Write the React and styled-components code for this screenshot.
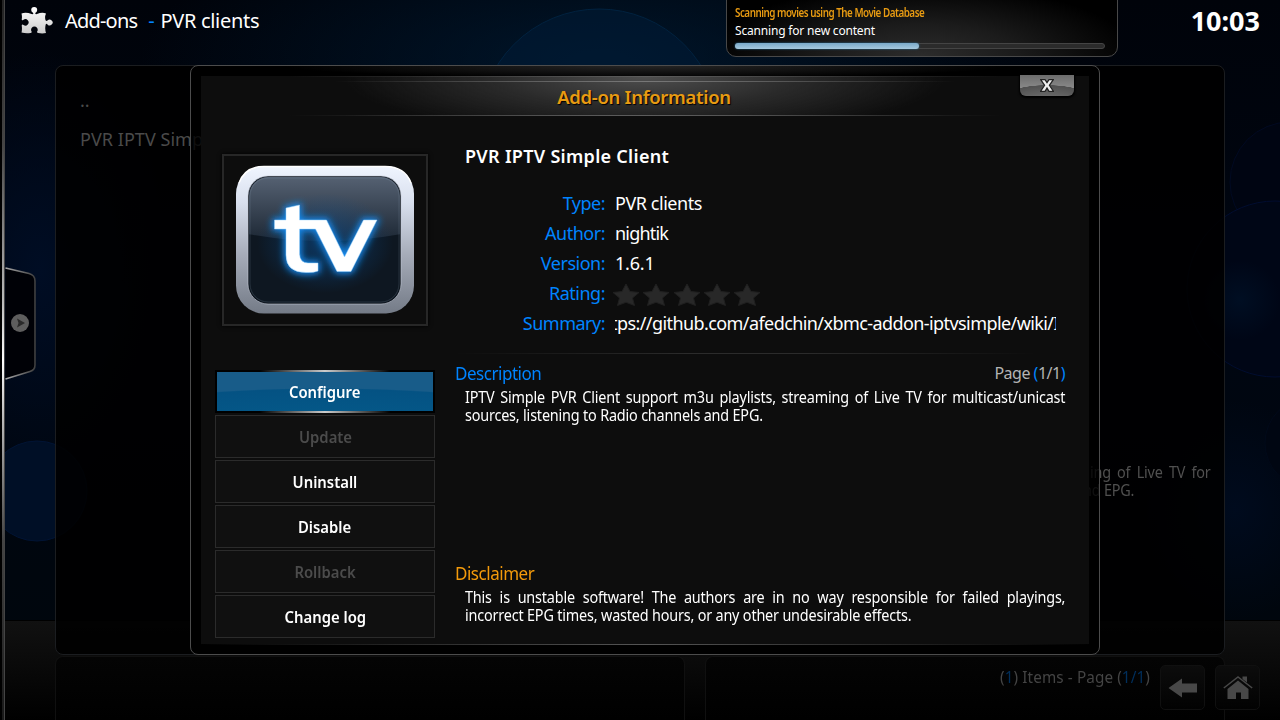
import React from "react";
import styled, { createGlobalStyle } from "styled-components";

const GlobalStyle = createGlobalStyle`
  body {
    margin: 0;
    background: #000;
    overflow: hidden;
    font-family: "Noto Sans", sans-serif;
  }
`;

const infoRows = [
  { label: "Type:", value: "PVR clients", gap: -0.45 },
  { label: "Author:", value: "nightik", gap: -0.8 },
  { label: "Version:", value: "1.6.1", gap: -0.2 },
  { label: "Rating:", stars: 5 },
  {
    label: "Summary:",
    value: "tps://github.com/afedchin/xbmc-addon-iptvsimple/wiki/I",
    shift: -4,
    gap: -0.58,
  },
];

const actions = [
  { text: "Configure", state: "focus" },
  { text: "Update", state: "off" },
  { text: "Uninstall" },
  { text: "Disable" },
  { text: "Rollback", state: "off" },
  { text: "Change log" },
];

const App = () => {
  return (
    <Screen>
      <GlobalStyle />
      <Backdrop />
      <Page>
        <TopBar>
          <PuzzleIcon />
          <Crumb $space={-0.8}>Add-ons</Crumb>
          <Dash>-</Dash>
          <Crumb>PVR clients</Crumb>
          <Clock>10:03</Clock>
        </TopBar>
        <ListPanel>
          <ListItem>..</ListItem>
          <ListItem>PVR IPTV Simple Client</ListItem>
          <Plot>
            <PlotLine>streaming of Live TV for</PlotLine>
            <PlotLine>channels and EPG.</PlotLine>
          </Plot>
        </ListPanel>
        <Footer>
          <FooterPanel $width={630} />
          <FooterPanel $width={520}>
            <span>
              (<b>1</b>) Items - Page (<b>1/1</b>)
            </span>
          </FooterPanel>
        </Footer>
      </Page>
      <NavButtons>
        <NavButton>
          <svg width="30" height="22" viewBox="0 0 30 22">
            <path d="M0.500 11 14 1.500V6.500H29V15.500H14V20.500Z" fill="#484848" />
          </svg>
        </NavButton>
        <NavButton>
          <svg width="30" height="26" viewBox="0 0 30 26">
            <path d="M4.500 14 15 5.500 25.500 14V24H18V17.500H13V24H4.500Z" fill="#484848" />
            <path d="M0.800 13 15 2 29.200 13" fill="none" stroke="#484848" strokeWidth="1.500" />
            <path d="M19.500 1.500H24V7.500L19.500 4Z" fill="#484848" />
          </svg>
        </NavButton>
      </NavButtons>
      <SideHandle />
      <ScanBox>
        <ScanTitle>Scanning movies using The Movie Database</ScanTitle>
        <ScanText>Scanning for new content</ScanText>
        <Track>
          <TrackFill />
        </Track>
      </ScanBox>
      <Dialog>
        <DialogBody>
          <DialogTitle>Add-on Information</DialogTitle>
          <Close>
            <svg width="14" height="13" viewBox="0 0 14 13">
              <path
                d="M0.700 0.700H5L7 3.700 9 0.700H13.300L9.400 6.300 13.500 12.300H9L7 9 5 12.300H0.500L4.600 6.300Z"
                fill="#eee"
                stroke="#222"
                strokeWidth="1.200"
              />
            </svg>
          </Close>
          <Columns>
            <LeftColumn>
              <Thumb>
                <TvLogo />
              </Thumb>
              <ButtonList>
                {actions.map((a) => (
                  <Action key={a.text} $state={a.state}>
                    <ActionText>{a.text}</ActionText>
                  </Action>
                ))}
              </ButtonList>
            </LeftColumn>
            <RightColumn>
              <AddonName>PVR IPTV Simple Client</AddonName>
              {infoRows.map((row) => (
                <InfoRow key={row.label}>
                  <InfoLabel>{row.label}</InfoLabel>
                  {row.stars ? (
                    <Stars count={row.stars} />
                  ) : (
                    <InfoValue>
                      <Scroll $shift={row.shift} $space={row.gap}>
                        {row.value}
                      </Scroll>
                    </InfoValue>
                  )}
                </InfoRow>
              ))}
              <Divider />
              <Section $height={200}>
                <SectionHead>
                  <SectionTitle>Description</SectionTitle>
                  <PageCount>
                    Page <b>(</b>1/1<b>)</b>
                  </PageCount>
                </SectionHead>
                <Line $justify>
                  IPTV Simple PVR Client support m3u playlists, streaming of Live TV for multicast/unicast
                </Line>
                <Line>sources, listening to Radio channels and EPG.</Line>
              </Section>
              <Section>
                <SectionHead>
                  <SectionTitle $orange>Disclaimer</SectionTitle>
                </SectionHead>
                <Line $justify>
                  This is unstable software! The authors are in no way responsible for failed playings,
                </Line>
                <Line>incorrect EPG times, wasted hours, or any other undesirable effects.</Line>
              </Section>
            </RightColumn>
          </Columns>
        </DialogBody>
      </Dialog>
    </Screen>
  );
};

const Backdrop = () => {
  return (
    <BackdropSvg width="1280" height="720" viewBox="0 0 1280 720">
      <defs>
        <linearGradient id="sky" x1="0" y1="0" x2="0" y2="1">
          <stop offset="0" stopColor="#00030a" />
          <stop offset="0.4" stopColor="#000612" />
          <stop offset="1" stopColor="#00060c" />
        </linearGradient>
        <radialGradient id="glow">
          <stop offset="0" stopColor="#00284a" stopOpacity="0.700" />
          <stop offset="1" stopColor="#00284a" stopOpacity="0" />
        </radialGradient>
        <radialGradient id="blue">
          <stop offset="0" stopColor="#000d24" />
          <stop offset="1" stopColor="#000d24" stopOpacity="0" />
        </radialGradient>
        <linearGradient id="floor" x1="0" y1="0" x2="0" y2="1">
          <stop offset="0" stopColor="#111" />
          <stop offset="1" stopColor="#000" />
        </linearGradient>
      </defs>
      <rect width="1280" height="720" fill="url(#sky)" />
      <ellipse cx="600" cy="60" rx="460" ry="150" fill="url(#glow)" opacity="0.700" />
      <ellipse cx="40" cy="270" rx="130" ry="220" fill="url(#blue)" />
      <circle cx="599" cy="129" r="120" fill="#001a36" fillOpacity="0.600" stroke="#00223f" />
      <circle cx="37" cy="491" r="50" fill="#000f26" stroke="#001434" />
      <circle cx="1290" cy="182" r="60" fill="#000512" stroke="#000a22" />
      <circle cx="1275" cy="289" r="88" fill="#000616" stroke="#000d30" />
      <ellipse cx="1240" cy="300" rx="40" ry="40" fill="url(#glow)" opacity="0.350" />
      <ellipse cx="1235" cy="510" rx="90" ry="110" fill="url(#blue)" opacity="0.700" />
      <circle cx="1310" cy="443" r="45" fill="#000612" stroke="#000a1a" />
      <rect y="621" width="1280" height="99" fill="url(#floor)" />
      <path d="M0 620.500H1280" stroke="#000" />
    </BackdropSvg>
  );
};

const PuzzleIcon = () => {
  return (
    <svg width="32" height="27" viewBox="0 0 32 27">
      <defs>
        <linearGradient id="puzzle" x1="0" y1="0" x2="0" y2="1">
          <stop offset="0" stopColor="#fff" />
          <stop offset="1" stopColor="#ccc" />
        </linearGradient>
      </defs>
      <path
        fill="url(#puzzle)"
        d="M0.500 6.500Q5 5 10.500 7Q12.500 7.500 12.300 6Q10.200 4.800 10.200 3A3 3 0 0 1 16.200 3Q16.200 4.800 14.300 6Q14.200 7.500 16 7Q21 5 25 6.500Q23.500 10 24.500 13Q25 14.800 26.500 13.600A2.900 2.900 0 1 1 26.500 17.400Q25 16 24.600 18Q23.700 22 25 26Q21 26.800 17 25.900Q15.200 25.300 16.600 23.700A3.300 3.300 0 1 0 10.200 23.700Q11.500 25.500 9.500 26Q5 26.800 0.500 25.500Q1.300 22 0.700 18.500Q1 17 2.500 18A3.200 3.200 0 1 0 2.500 12.800Q1 14 0.700 12.500Q1.300 9.500 0.500 6.500Z"
      />
    </svg>
  );
};

const TvLogo = () => {
  return (
    <svg width="180" height="150" viewBox="0 0 180 150">
      <defs>
        <linearGradient id="rim" x1="0" y1="0" x2="0" y2="1">
          <stop offset="0" stopColor="#f0f5ff" />
          <stop offset="0.250" stopColor="#d8dfed" />
          <stop offset="0.600" stopColor="#a6acb9" />
          <stop offset="1" stopColor="#747b87" />
        </linearGradient>
        <linearGradient id="glass" x1="0" y1="0" x2="0" y2="1">
          <stop offset="0" stopColor="#566273" />
          <stop offset="1" stopColor="#1c2734" />
        </linearGradient>
        <radialGradient id="aura">
          <stop offset="0" stopColor="#0a4f92" stopOpacity="0.600" />
          <stop offset="1" stopColor="#0a4f92" stopOpacity="0" />
        </radialGradient>
        <clipPath id="screen">
          <rect x="14" y="12" width="151" height="126" rx="19" />
        </clipPath>
        <filter id="neon" x="-30%" y="-30%" width="160%" height="160%">
          <feGaussianBlur stdDeviation="3.500" />
        </filter>
      </defs>
      <rect x="1" y="1" width="178" height="147.500" rx="28" fill="url(#rim)" />
      <path d="M4 18Q10 1.500 29 1.500H150Q170 1.500 176 18" fill="none" stroke="#fff" strokeWidth="1.500" />
      <rect x="13" y="11" width="153" height="128" rx="20" fill="#0d131b" stroke="#c4cbd8" strokeWidth="0.600" />
      <g clipPath="url(#screen)">
        <rect x="13" y="11" width="153" height="128" fill="#0e1721" />
        <path d="M13 11H166V69Q89 83 13 69Z" fill="url(#glass)" />
        <ellipse cx="90" cy="78" rx="68" ry="50" fill="url(#aura)" />
      </g>
      <rect x="15" y="13" width="149" height="124" rx="18" fill="none" stroke="#8fa3bb" strokeOpacity="0.200" />
      <g fill="#168bf0" stroke="#168bf0" strokeWidth="4" filter="url(#neon)">
        <LogoMark />
      </g>
      <g fill="#fff" stroke="#9ed4ff" strokeWidth="0.500">
        <LogoMark />
      </g>
    </svg>
  );
};

// the mark of the client: a "t" whose bar runs into the "v"
const LogoMark = () => {
  return (
    <path d="M39.500 55H51V43L64.500 40V55H91.500L109.500 92 128.500 55H142L116 106.500H102L80.500 64H64.500V88Q64.500 98 73 98H83V106Q78 108 71 107.500Q51 107.500 51 90V64H39.500Z" />
  );
};

const Stars = ({ count }) => {
  return (
    <StarRow>
      {Array.from({ length: count }, (_, i) => (
        <svg key={i} width="28" height="24" viewBox="0 0 28 24">
          <path
            d="M14 1 18 8.500 27 9.500 20.500 15 22.500 22.500 14 19.300 5.500 22.500 7.500 15 1 9.500 10 8.500Z"
            fill="#282828"
            stroke="#202020"
          />
        </svg>
      ))}
    </StarRow>
  );
};

const SideHandle = () => {
  return (
    <HandleSvg width="40" height="720" viewBox="0 0 40 720">
      <defs>
        <linearGradient id="edge" x1="0" y1="0" x2="0" y2="720" gradientUnits="userSpaceOnUse">
          <stop offset="0" stopColor="#222" />
          <stop offset="0.200" stopColor="#444" />
          <stop offset="0.420" stopColor="#bbb" />
          <stop offset="0.500" stopColor="#fff" />
          <stop offset="0.580" stopColor="#bbb" />
          <stop offset="0.750" stopColor="#444" />
          <stop offset="1" stopColor="#181818" />
        </linearGradient>
        <linearGradient id="tab" x1="5" y1="0" x2="36" y2="0" gradientUnits="userSpaceOnUse">
          <stop offset="0" stopColor="#aaa" />
          <stop offset="1" stopColor="#3c3c3c" />
        </linearGradient>
      </defs>
      <rect width="5" height="720" fill="#000" />
      <rect x="2" width="2" height="720" fill="url(#edge)" />
      <rect x="4" width="1" height="720" fill="#444" />
      <path d="M5.500 268 29 273.500Q35 275 35 281V365Q35 370 30 371.500L5.500 379Z" fill="#000106" />
      <path
        d="M5.500 268 29 273.500Q35 275 35 281V365Q35 370 30 371.500L5.500 379"
        fill="none"
        stroke="url(#tab)"
        strokeWidth="1.600"
      />
      <circle cx="20" cy="323" r="9" fill="#5e5e5e" />
      <path d="M17 318.500 25 323 17 327.500 18.500 323Z" fill="#2a2a2a" />
    </HandleSvg>
  );
};

const Screen = styled.div`
  position: relative;
  width: 1280px;
  height: 720px;
  overflow: hidden;
  color: #fff;
`;

const BackdropSvg = styled.svg`
  position: absolute;
  inset: 0;
`;

const HandleSvg = styled.svg`
  position: absolute;
  left: 0;
  top: 0;
`;

const Page = styled.div`
  position: relative;
  display: flex;
  flex-direction: column;
  height: 720px;
`;

const TopBar = styled.div`
  display: flex;
  height: 65px;
  padding: 0 20px 0 21px;
  box-sizing: border-box;

  svg {
    margin-top: 7px;
  }
`;

const Crumb = styled.div`
  font-size: 20px;
  line-height: 42px;
  letter-spacing: ${(p) => p.$space || -0.3}px;
  white-space: nowrap;

  svg + & {
    margin-left: 12px;
  }
`;

const Dash = styled(Crumb)`
  color: #0084ff;
  margin: 0 6px 0 11px;
`;

const Clock = styled.div`
  margin-left: auto;
  font-size: 27px;
  font-weight: 700;
  line-height: 42px;
`;

const ListPanel = styled.div`
  display: flex;
  flex-direction: column;
  width: 1170px;
  height: 590px;
  margin-left: 55px;
  padding: 15px 13px 0 24px;
  box-sizing: border-box;
  border: 1px solid #1b1d20;
  border-radius: 8px;
  background: rgba(0, 0, 0, 0.88);
`;

const ListItem = styled.div`
  height: 39px;
  line-height: 39px;
  font-size: 18px;
  letter-spacing: 0.05px;
  color: #4a4a4a;
`;

const Plot = styled.div`
  display: flex;
  flex-direction: column;
  align-items: flex-end;
  margin-top: 304px;
  color: #505050;
`;

const PlotLine = styled.div`
  font-size: 16px;
  line-height: 18px;
  letter-spacing: -0.2px;
  word-spacing: 3px;
  white-space: nowrap;
  transform: scaleX(0.9);
  transform-origin: right;

  & + & {
    margin-right: 77px;
    word-spacing: 0;
  }
`;

const Footer = styled.div`
  display: flex;
  gap: 20px;
  height: 64px;
  padding: 1px 0 0 55px;
`;

const FooterPanel = styled.div`
  width: ${(p) => p.$width}px;
  height: 64px;
  padding: 11px 74px 0 0;
  box-sizing: border-box;
  border: 1px solid #101010;
  border-bottom: 0;
  border-radius: 8px 8px 0 0;
  background: linear-gradient(#040404, #000);
  text-align: right;
  font-size: 16px;
  line-height: 19px;

  span {
    display: inline-block;
    color: #444;
    letter-spacing: 0.1px;
    transform: scaleX(0.955);
    transform-origin: right;
  }

  b {
    font-weight: 400;
    color: #002f5c;
  }
`;

const NavButtons = styled.div`
  position: absolute;
  left: 1160px;
  top: 665px;
  display: flex;
  gap: 10px;
`;

const NavButton = styled.div`
  display: flex;
  align-items: center;
  justify-content: center;
  width: 45px;
  height: 45px;
  box-sizing: border-box;
  border: 1px solid #101010;
  border-radius: 5px;
  background: linear-gradient(#0c0c0c, #020202);
`;

const ScanBox = styled.div`
  position: absolute;
  left: 726px;
  top: -10px;
  width: 392px;
  height: 67px;
  padding: 13px 12px 0 8px;
  box-sizing: border-box;
  border: 1px solid #484848;
  border-radius: 10px;
  background: radial-gradient(ellipse at 50% 100%, #2c2c2c, #1b1b1b 35%, #000 78%);
`;

const ScanTitle = styled.div`
  height: 18px;
  font-size: 12px;
  line-height: 18px;
  letter-spacing: -0.6px;
  font-weight: 600;
  color: #e89b12;
  white-space: nowrap;
  transform: scaleX(0.82);
  transform-origin: left;
`;

const ScanText = styled.div`
  font-size: 12px;
  line-height: 18px;
  height: 21px;
  letter-spacing: -0.18px;
`;

const Track = styled.div`
  height: 6px;
  width: 370px;
  box-sizing: border-box;
  border: 1px solid #444;
  border-radius: 3px;
  background: #2b2b2b;
`;

const TrackFill = styled.div`
  width: 184px;
  height: 6px;
  margin: -1px;
  border-radius: 3px;
  background: linear-gradient(#79a9c9, #a5c9df);
  box-shadow: 0 0 2px #287aa8;
`;

const Dialog = styled.div`
  position: absolute;
  left: 190px;
  top: 65px;
  width: 910px;
  height: 590px;
  padding: 10px;
  box-sizing: border-box;
  border: 1px solid #4c4c4c;
  border-radius: 8px;
  background: radial-gradient(ellipse 360px 12px at 50% 0, #252525, transparent), rgba(0, 0, 0, 0.8);
`;

const DialogBody = styled.div`
  position: relative;
  height: 569px;
  background: #0d0d0d;
  border-bottom: 1px solid;
  border-image: linear-gradient(90deg, #000, #555 50%, #000) 1;
  box-sizing: border-box;
`;

const DialogTitle = styled.div`
  height: 40px;
  box-sizing: border-box;
  padding-right: 2px;
  border-top: 1px solid;
  border-bottom: 1px solid;
  border-image: linear-gradient(90deg, transparent 10%, #5c5c5c 50%, transparent 90%) 1;
  background: linear-gradient(90deg, transparent 15%, #777 50%, transparent 85%) 0 4px / 100% 1px no-repeat,
    radial-gradient(ellipse 300px 60px at 50% 0, #4e4e4e, #2a2a2a 50%, transparent);
  text-align: center;
  font-size: 18.5px;
  font-weight: 600;
  line-height: 39px;
  letter-spacing: -0.3px;
  color: #e89b12;
  text-shadow: 1px 1px 1px #000;
`;

const Close = styled.div`
  position: absolute;
  right: 15px;
  top: -1px;
  display: flex;
  align-items: center;
  justify-content: center;
  width: 54px;
  height: 21px;
  border-radius: 0 0 6px 6px;
  background: radial-gradient(ellipse 50px 18px at 50% 28px, #777, #505050 98%, transparent),
    linear-gradient(#6c6c6c, #9a9a9a);
  box-shadow: 0 1px 2px 1px #000;
`;

const Columns = styled.div`
  display: flex;
`;

const LeftColumn = styled.div`
  display: flex;
  flex-direction: column;
  width: 234px;
  padding: 38px 0 0 14px;
  box-sizing: border-box;
`;

const Thumb = styled.div`
  display: flex;
  align-items: center;
  justify-content: center;
  width: 206px;
  height: 172px;
  margin-left: 7px;
  box-sizing: border-box;
  border: 2px solid #272727;
  box-shadow: 0 0 4px #000;
`;

const ButtonList = styled.div`
  display: flex;
  flex-direction: column;
  gap: 2px;
  margin-top: 44px;
`;

const Action = styled.div`
  height: 43px;
  box-sizing: border-box;
  border: 1px solid #2b2b2b;
  background: #101010;
  text-align: center;
  font-size: 16.5px;
  font-weight: 600;
  line-height: 42px;
  color: ${(p) => (p.$state === "off" ? "#4b4b4b" : "#fff")};

  ${(p) =>
    p.$state === "focus" &&
    `
    border: 2px solid;
    border-image: linear-gradient(90deg, #000 20%, #ccc 50%, #000 80%) 1;
    line-height: 40px;
    background: radial-gradient(ellipse 320px 60px at 50% 76px, #05608f, #045283 98%, transparent),
      linear-gradient(#185c89, #185c89);
  `}
`;

const ActionText = styled.span`
  display: inline-block;
  transform: scaleX(0.9);
`;

const RightColumn = styled.div`
  display: flex;
  flex-direction: column;
  width: 632px;
  padding: 25px 0 0 20px;
  box-sizing: border-box;
`;

const AddonName = styled.div`
  height: 47px;
  margin-left: 10px;
  line-height: 30px;
  font-size: 18px;
  font-weight: 600;
  letter-spacing: 0.3px;
`;

const InfoRow = styled.div`
  display: flex;
  height: 30px;
  line-height: 30px;
  font-size: 18px;
`;

const InfoLabel = styled.div`
  width: 150px;
  text-align: right;
  letter-spacing: -0.5px;
  color: #0084ff;
`;

const InfoValue = styled.div`
  width: 441px;
  margin-left: 10px;
  overflow: hidden;
`;

const Scroll = styled.div`
  margin-left: ${(p) => p.$shift || 0}px;
  letter-spacing: ${(p) => p.$space}px;
  white-space: nowrap;
`;

const StarRow = styled.div`
  display: flex;
  gap: 2.300px;
  margin: 5px 0 0 7px;
`;

const Divider = styled.div`
  height: 1px;
  margin: 15px 30px 4px 0;
  background: linear-gradient(90deg, transparent, #2b2b2b 40%, #2b2b2b 60%, transparent);
`;

const Section = styled.div`
  width: 610px;
  height: ${(p) => (p.$height ? p.$height + "px" : "auto")};
`;

const SectionHead = styled.div`
  display: flex;
  justify-content: space-between;
  height: 30px;
  line-height: 30px;
`;

const SectionTitle = styled.div`
  font-size: 18px;
  letter-spacing: -0.5px;
  color: ${(p) => (p.$orange ? "#f39a0b" : "#0084ff")};
  transform: scaleX(0.945);
  transform-origin: left;
`;

const PageCount = styled.div`
  font-size: 16px;
  letter-spacing: -0.5px;
  color: #b4b4b4;

  b {
    font-weight: 400;
    color: #0084ff;
  }
`;

const Line = styled.div`
  width: 667px;
  height: 18px;
  margin-left: 10px;
  font-size: 16px;
  line-height: 18px;
  letter-spacing: -0.2px;
  white-space: nowrap;
  text-align-last: ${(p) => (p.$justify ? "justify" : "left")};
  transform: scaleX(0.9);
  transform-origin: left;
`;

export default App;
